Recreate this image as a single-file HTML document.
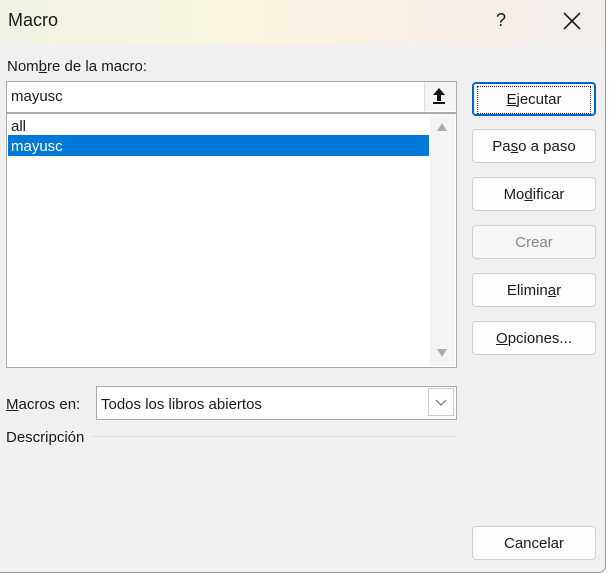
<!DOCTYPE html><html><head><style>
body{margin:0;width:610px;height:574px;background:#fff;font-family:"Liberation Sans",sans-serif;font-size:15px;color:#1a1a1a;position:relative;overflow:hidden}
.dlg{position:absolute;left:0;top:0;width:605px;height:572px;background:#f0f0f0;border-right:1px solid #999;border-bottom:1px solid #999;border-bottom-right-radius:7px}
.title{position:absolute;left:0;top:0;width:605px;height:44px;background:linear-gradient(90deg,#f1f2e4,#f8f4e0 40%,#f7efe6 70%,#f3eeec)}
.a{position:absolute}
.btn{position:absolute;left:472px;width:122px;height:32px;background:#fdfdfd;border:1px solid #d0d0d0;border-radius:4px;text-align:center;line-height:34px;font-size:15px}
u{text-decoration:underline}
</style></head><body><div class="dlg">
<div class="title"></div>
<div class="a" style="left:8px;top:10px;font-size:18px">Macro</div>
<div class="a" style="left:496px;top:10px;font-size:18px">?</div>
<svg class="a" style="left:563px;top:12px" width="18" height="18"><path d="M1 1L17 17M17 1L1 17" stroke="#222" stroke-width="1.6"/></svg>
<div class="a" style="left:7px;top:58px">Nom<u>b</u>re de la macro:</div>
<div class="a" style="left:6px;top:81px;width:449px;height:30px;background:#fff;border:1px solid #aaa"></div>
<div class="a" style="left:11px;top:88px">mayusc</div>
<div class="a" style="left:424px;top:82px;width:31px;height:29px;background:#f4f4f4;border-left:1px solid #ddd"></div>
<svg class="a" style="left:431px;top:86px" width="16" height="20"><path d="M8 2L2 9H6V15H10V9H14Z" fill="#111"/><rect x="2" y="16" width="12" height="2" fill="#111"/></svg>
<div class="a" style="left:6px;top:113px;width:449px;height:253px;background:#fff;border:1px solid #aaa"></div>
<div class="a" style="left:430px;top:114px;width:25px;height:252px;background:#f4f4f4"></div>
<svg class="a" style="left:436px;top:122px" width="12" height="10"><path d="M6 1L11 9H1Z" fill="#aaa"/></svg>
<svg class="a" style="left:436px;top:348px" width="12" height="10"><path d="M6 9L11 1H1Z" fill="#aaa"/></svg>
<div class="a" style="left:11px;top:118px">all</div>
<div class="a" style="left:8px;top:135px;width:421px;height:21px;background:#0078d7;color:#fff;line-height:23px;padding-left:3px;box-sizing:border-box">mayusc</div>
<div class="btn" style="top:82px;border:1px solid #0067c0;box-shadow:inset 0 0 0 1px #0067c0"><span style="border:1px dotted #333;padding:0 28px;line-height:26px;display:inline-block;margin-top:2px"><u>E</u>jecutar</span></div>
<div class="btn" style="top:129px">Pa<u>s</u>o a paso</div>
<div class="btn" style="top:177px">Mo<u>d</u>ificar</div>
<div class="btn" style="top:225px;color:#888;background:#f6f6f6">Crear</div>
<div class="btn" style="top:273px">Elimin<u>a</u>r</div>
<div class="btn" style="top:321px"><u>O</u>pciones...</div>
<div class="btn" style="top:526px">Cancelar</div>
<div class="a" style="left:6px;top:396px"><u>M</u>acros en:</div>
<div class="a" style="left:96px;top:386px;width:359px;height:32px;background:#fff;border:1px solid #aaa"></div>
<div class="a" style="left:101px;top:396px">Todos los libros abiertos</div>
<div class="a" style="left:428px;top:388px;width:26px;height:28px;border:1px solid #ccc;box-sizing:border-box"></div>
<svg class="a" style="left:435px;top:399px" width="12" height="8"><path d="M1 1L6 6L11 1" fill="none" stroke="#666"/></svg>
<div class="a" style="left:6px;top:429px">Descripción</div>
<div class="a" style="left:92px;top:436px;width:364px;height:1px;background:#ddd"></div>
</div></body></html>
